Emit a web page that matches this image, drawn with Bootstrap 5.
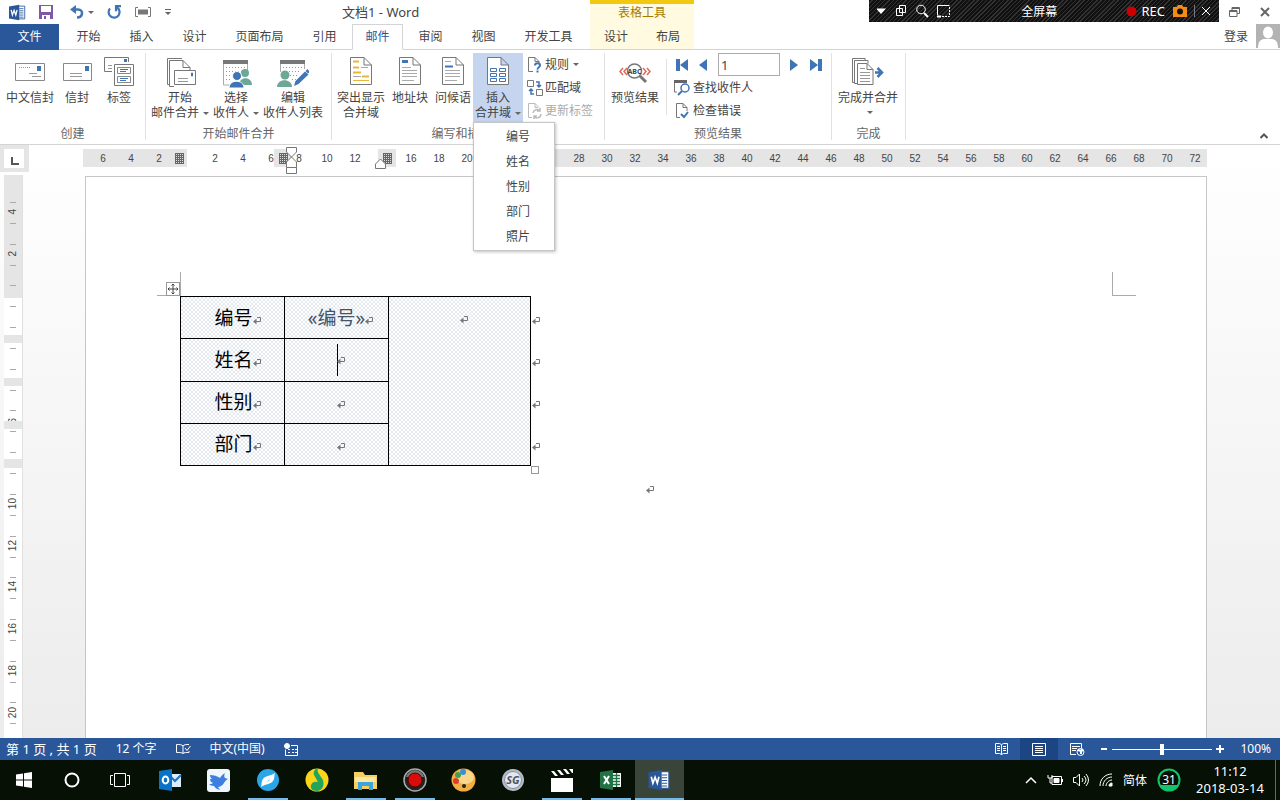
<!DOCTYPE html>
<html lang="zh-CN">
<head>
<meta charset="utf-8">
<meta name="viewport" content="width=device-width, initial-scale=1">
<title>文档1 - Word</title>
<link href="https://cdn.jsdelivr.net/npm/bootstrap@5.3.0/dist/css/bootstrap.min.css" rel="stylesheet">
<style>
body{font-family:"Noto Sans","Noto Sans CJK SC",sans-serif;font-size:12px;line-height:15px;color:#444;background:#fff;height:100vh;overflow:hidden}
button{border:0;background:none;padding:0;color:inherit;font:inherit;display:flex;align-items:center;justify-content:center}
svg{display:block;flex:none}
/* title bar */
.titlebar{height:24px}
.quick{width:342px;padding-left:9px;gap:13px}
.quick button{height:24px}
.doctitle{width:248px;font-size:13px}
.ctxhead{width:104px;height:24px;background:#fffae0;border-top:4px solid #f2c811;color:#a57a00;text-align:center;line-height:18px}
.recorder{width:350px;height:22px;align-self:flex-start;color:#fff;background:repeating-linear-gradient(135deg,#111 0 2px,#333 2px 3px)}
.rec{font-size:13px}
.wincontrols{width:61px}
/* tabs */
.tabrow{height:26px;border-bottom:1px solid #d4d4d4}
.tabrow a{color:#444;text-decoration:none;width:53px;height:26px;line-height:24px;text-align:center;border:1px solid transparent;flex:none}
.tabrow a.wide{width:77px}
.tabrow a.filetab{width:59px;background:#2a579a;color:#fff;margin-right:3px}
.tabrow a.current{width:51px;margin:0 1px;background:#fff;border-color:#d4d4d4 #d4d4d4 #fff;color:#2a579a}
.ctxtabs{background:#fffae0;width:104px;height:25px;margin-left:3px}
.ctxtabs a{width:52px}
.tabrow a.signin{width:40px}
/* ribbon */
.ribbon{height:95px;padding-top:3px;border-bottom:1px solid #d4d4d4}
.rgroup{border-right:1px solid #e1e1e1;height:87px;padding:0 4px}
.g1{width:146px}.g2{width:186px}.g3{width:273px}.g4{width:227px}.g5{width:74px}
.g3{padding-left:3px}
.rlabel{text-align:center;color:#666;line-height:18px;padding-top:3px}
.big{flex-direction:column;justify-content:flex-start;height:69px;padding-top:3px;width:52px;white-space:nowrap}
.big svg.ico{margin-bottom:2px}
.w42{width:42px}.w46{width:46px}.w40{width:40px}.w50{width:50px}.w60{width:60px}.w62{width:62px}.w64{width:64px}
.pressed{background:#c5d5f0}
.rowbtn{height:23px;gap:2px;white-space:nowrap;justify-content:flex-start}
.caret{display:inline-block;border:3px solid transparent;border-top-color:#666;border-bottom:0;margin-left:4px;vertical-align:2px}
.rowbtn .caret{margin-left:2px}
.big>.caret{margin-top:6px}
.off{color:#aaa}
.fieldmenu{left:0;top:69px;width:82px;padding:1px;margin:0;list-style:none;background:#fff;border:1px solid #c6c6c6;box-shadow:1px 1px 3px rgba(0,0,0,.25);z-index:10}
.fieldmenu button{width:100%;height:25px;padding-left:8px}
.recno{width:62px;height:23px;border:1px solid #ababab;padding:0 2px;font-size:13px;color:#444}
.recnav{gap:10px;padding-left:3px}
.vsep{border-left:1px solid #e1e1e1;height:56px;margin:6px 6px 0 5px}
/* workspace */
.work{background:linear-gradient(#fff 0,#ececec 100%)}
.corner{width:29px;height:27px;background:#e5e5e5;padding:4px}
.corner div{background:#fff;width:20px;height:19px}
.hruler{min-width:0;margin:4px 73px 0 54px;height:18px;font:10px/19px "Liberation Sans",sans-serif;padding-left:6px;
 background:linear-gradient(90deg,#e5e5e5 104px,#fff 104px 191px,#e5e5e5 191px 208px,#fff 208px 295px,#e5e5e5 295px 313px,#fff 313px 448px,#e5e5e5 448px)}
.hruler span{width:28px;flex:none;text-align:center}
.hcells{overflow:hidden}
.mk{position:absolute}
.hatch{width:9px;height:11px;top:4px;background:repeating-linear-gradient(90deg,#666 0 1px,transparent 1px 2px),repeating-linear-gradient(#666 0 1px,#ddd 1px 2px)}
.vruler{width:19px;margin:3px 62px 0 4px;padding:16px 0 5px;background:linear-gradient(#e5e5e5 123px,#fff 123px);border-right:1px solid #e0e0e0;font:10px/18px "Liberation Sans",sans-serif}
.vruler::after{content:"";position:absolute;left:0;right:0;top:160px;height:133px;background:linear-gradient(#e5e5e5 8px,transparent 8px 43px,#e5e5e5 43px 51px,transparent 51px 86px,#e5e5e5 86px 94px,transparent 94px 124px,#e5e5e5 124px)}
.vruler div{flex:1;background:linear-gradient(#aaa,#aaa) center 11px/6px 1px no-repeat,linear-gradient(#aaa,#aaa) center 32px/6px 1px no-repeat;display:flex;align-items:center;justify-content:center}
.vruler span{writing-mode:vertical-rl;transform:rotate(180deg)}
.sheet{background:#fff;border:1px solid #c6c6c6;border-bottom:0;margin:4px 73px 0 0;padding-top:95px}
.crops{padding:0 70px 0 71px;height:24px}
.crops div{width:24px;height:24px;border-bottom:1px solid #aaa}
.cl{border-right:1px solid #aaa}.cr{border-left:1px solid #aaa}
.movebox{right:0;bottom:-1px;width:14px;height:14px;border:1px solid #999;background:#fff}
.tablewrap{margin-left:94px;width:360px}
.form-grid{border-collapse:collapse;table-layout:fixed;width:360px;height:170px;color:#000;font-size:19px;line-height:24px}
.form-grid tr{height:42px}
.form-grid td{border:1px solid #000;padding:0 0 0 2px;text-align:center;vertical-align:middle;
 background:conic-gradient(from 270deg at 1px 1px,#93a9bf 90deg,transparent 0) 0 0/4px 4px,conic-gradient(from 270deg at 1px 1px,#93a9bf 90deg,transparent 0) 2px 2px/4px 4px}
.form-grid td.field,.form-grid td.blank{padding-left:0}
.form-grid td.rowend{border:0;background:none;text-align:left;padding-left:1px}
.form-grid td.tall{vertical-align:top;padding:8px 0 0}
.form-grid .field{color:#44546a}
.pm{display:inline-block;margin-right:-8px;vertical-align:0}
.textcaret{display:inline-block;width:1px;height:32px;background:#000;vertical-align:middle;margin-right:-1px}
.sizer{right:1px;bottom:-8px;width:8px;height:8px;border:1px solid #999;background:#fff}
/* status + task bars */
.status{height:22px;background:#2a579a;color:#fff;padding-left:6px;line-height:20px}
.counts{gap:19px}
.pages{font-size:13px}
.status .view{width:38px;height:22px}
.status .on{background:#1c4683}
.zoomer{appearance:none;width:100px;height:12px;margin:0 4px;background:linear-gradient(#fff,#fff) center/100% 1px no-repeat}
.zoomer::-webkit-slider-thumb{appearance:none;width:4px;height:11px;background:#fff}
.pct{width:56px;text-align:right;padding-right:9px}
.taskbar{height:40px;background:#061004;color:#fff}
.taskbar .app{width:49px;height:40px}
.taskbar .sys{width:48px}
.taskbar .task{margin-left:1px}
.taskbar .run{background:linear-gradient(#76b9ed,#76b9ed) center bottom/40px 2px no-repeat}
.taskbar .act{background:linear-gradient(#76b9ed,#76b9ed) center bottom/49px 2px no-repeat,#3a453a}
.tray{gap:10px}
.clock{width:90px;line-height:17px;font-size:13px;text-align:center;margin-left:-6px}
.edge{border-left:1px solid #667;width:5px;height:40px;margin-left:-10px}
</style>
</head>
<body class="d-flex flex-column">
<svg width="0" height="0" class="position-absolute" aria-hidden="true">
 <symbol id="pm" viewBox="0 0 8 8"><path d="M4 .5H7.500V4.500H1" fill="none" stroke="#777"/><path d="M0 4.500L3.500 1.500v6z" fill="#777"/></symbol>
 <symbol id="doc" viewBox="0 0 22 28"><path d="M.5.500H14L21.500 8V27.500H.5zM14 .5V8h7.500" fill="#fff" stroke="#777"/></symbol>
 <symbol id="wlogo" viewBox="0 0 20 20"><path d="M10 2.500h8.500v15H10z" fill="#fff" stroke="#2a579a"/><path d="M12 5.500h5M12 8h5M12 10.500h5M12 13h5M12 15.500h5" stroke="#2a579a"/><path d="M0 3l12-2v18L0 17z" fill="#2a579a"/><path d="M2.500 7l1.500 6L6 7.500 8 13 9.500 7" fill="none" stroke="#fff" stroke-width="1.500"/></symbol>
</svg>

<header>
 <div class="titlebar d-flex align-items-center">
  <div class="quick d-flex align-items-center">
   <svg width="17" height="17"><use href="#wlogo"/></svg>
   <button aria-label="保存"><svg width="14" height="14"><path d="M0 0h14v14H0z" fill="#7d5aa6"/><path d="M2 1h10v6H2zM3 10h8v4H3z" fill="#fff"/><path d="M5 11h2v3H5z" fill="#7d5aa6"/></svg></button>
   <div class="d-flex ps-1"><button aria-label="撤消"><svg width="14" height="14"><path d="M0 4.500L6 0v9z" fill="#3f74b5"/><path d="M3 4.500h5c6 0 5 8-1 8" fill="none" stroke="#3f74b5" stroke-width="2.500"/></svg></button>
   <button aria-label="撤消列表"><i class="caret"></i></button></div>
   <button aria-label="重复"><svg width="15" height="15" fill="none" stroke="#3f74b5" stroke-width="2.200"><path d="M3 3.500a5.500 5.500 0 1 0 7-1M14 1.200H9v5"/></svg></button>
   <button aria-label="键盘"><svg width="16" height="10"><path d="M3 2.500h10v5H3z" fill="#777"/><path d="M3 .5H.5v9H3M13 .5h2.500v9H13" fill="none" stroke="#777"/></svg></button>
   <button aria-label="自定义"><svg width="8" height="8"><path d="M1 1.500h6" stroke="#666"/><path d="M1 4h6L4 7z" fill="#666"/></svg></button>
  </div>
  <div class="doctitle">文档1 - Word</div>
  <div class="ctxhead">表格工具</div>
  <div class="recorder ms-auto d-flex align-items-center ps-2">
   <svg width="75" height="14" fill="none" stroke="#fff"><path d="M-1 4.500H9L4 10z" fill="#fff" stroke="none"/><path d="M19.500 4.500h6v7h-6zM22.500 1.500h6v7h-6z"/><circle cx="44" cy="5.500" r="4.300"/><path d="M47 9l4 4" stroke-width="2"/><path d="M60.500 11V1.500h12"/><path d="M72.500 3v9.500H62" stroke-dasharray="2 1"/><path d="M60 12.500h4" stroke-width="2"/></svg>
   <span class="flex-fill text-center">全屏幕</span>
   <svg width="11" height="11"><circle cx="5.500" cy="5.500" r="5" fill="#c00"/></svg>
   <span class="rec ms-1 me-2">REC</span>
   <svg width="14" height="12"><path d="M0 2h3.500L5 0h4l1.500 2H14v10H0z" fill="#f28c13"/><circle cx="7" cy="6.500" r="3" fill="#111"/></svg>
   <svg width="24" height="12" class="me-2" stroke="#fff"><path d="M7.500 0v12" stroke="#778"/><path d="M15 2l8 8M23 2l-8 8"/></svg>
  </div>
  <div class="wincontrols d-flex justify-content-around">
   <button aria-label="还原"><svg width="11" height="10" fill="none" stroke="#666"><path d="M.5 3.500h7.500v6H.5zM3 3V.500h7.500v6H8"/><path d="M0 4.500h8M3 1.500h8"/></svg></button>
   <button aria-label="关闭"><svg width="10" height="10" stroke="#666" stroke-width="2"><path d="M1 1l8 8M9 1l-8 8"/></svg></button>
  </div>
 </div>
 <nav class="tabrow d-flex">
  <a class="filetab" href="#">文件</a><a href="#">开始</a><a href="#">插入</a><a href="#">设计</a><a class="wide" href="#">页面布局</a><a href="#">引用</a><a class="current" href="#">邮件</a><a href="#">审阅</a><a href="#">视图</a><a class="wide" href="#">开发工具</a>
  <div class="ctxtabs d-flex"><a href="#">设计</a><a href="#">布局</a></div>
  <a class="signin ms-auto" href="#">登录</a>
  <svg width="24" height="24" viewBox="0 0 24 24"><path d="M0 0h24v24H0z" fill="#b3b3b3"/><ellipse cx="12" cy="8.500" rx="5" ry="6" fill="#fff"/><path d="M2 24c0-7 3-9 7-9h6c4 0 7 2 7 9z" fill="#fff"/></svg>
 </nav>
</header>

<section class="ribbon d-flex">
 <div class="rgroup g1">
  <div class="d-flex">
   <button class="big"><svg class="ico" width="32" height="32" fill="none"><path d="M1.500 7.500h29v17h-29z" stroke="#888"/><path d="M23 10h4v5h-4z" fill="#3f74b5"/><path d="M5 11.500h11" stroke="#d9805a" stroke-dasharray="1 1"/><path d="M15 17.500h8M18 20.500h9" stroke="#999"/></svg>中文信封</button>
   <button class="big w42"><svg class="ico" width="32" height="32" fill="none"><path d="M2.500 7.500h28v17h-28z" stroke="#888"/><path d="M24 10h4v5h-4z" fill="#3f74b5"/><path d="M9 17.500h12M9 20.500h12" stroke="#999"/></svg>信封</button>
   <button class="big w42"><svg class="ico" width="32" height="32" fill="none"><path d="M9 15.500H1.500v-14h24V6" stroke="#777"/><path d="M21 3h3v3h-3z" fill="#3f74b5"/><path d="M5 9.500h4M5 12.500h4" stroke="#999"/><path d="M11.500 8.500h19v21h-19z" fill="#fff" stroke="#777"/><path d="M14.500 11.500h13v6h-13zM14.500 20.500h13v6h-13z" stroke="#888"/><path d="M17 13.500h8M17 15.500h6M17 22.500h8M17 24.500h6" stroke="#3f74b5"/></svg>标签</button>
  </div><div class="rlabel">创建</div>
 </div>
 <div class="rgroup g2">
  <div class="d-flex">
   <button class="big w60"><svg class="ico" width="32" height="32" fill="none" stroke="#777"><path d="M5 28.500H3.500V2.500H18"/><path d="M10 30.500H5.500v-26H19l7 7v3"/><path d="M19 4.500v7h7"/><path d="M10.500 14.500h21v14h-21z" fill="#fff"/><path d="M27.500 17h1v3h-1z" fill="#3f74b5" stroke="#3f74b5"/><path d="M14 22.500h10M14 25.500h10" stroke="#999"/></svg><span>开始</span><span>邮件合并<i class="caret"></i></span></button>
   <button class="big"><svg class="ico" width="32" height="32"><path d="M3 4h25v4H3z" fill="#777"/><path d="M3.500 8v21H10M27.500 8v6" stroke="#aaa" fill="none"/><path d="M6 11.500h20M6 15.500h18M6 19.500h8M6 23.500h5" stroke="#999" stroke-dasharray="1 2"/><g fill="#6da796"><circle cx="25" cy="17" r="4"/><path d="M19 29c0-9 13-9 13 0z"/></g><g fill="#3f74b5" stroke="#fff"><circle cx="17" cy="20" r="4.500"/><path d="M9 32c0-9 15-9 15 0z"/></g></svg><span>选择</span><span>收件人<i class="caret"></i></span></button>
   <button class="big w62"><svg class="ico" width="32" height="32"><path d="M3 4h25v4H3z" fill="#777"/><path d="M3.500 8v8M27.500 8v5" stroke="#aaa"/><path d="M6 11.500h20M6 15.500h18M13 19.500h8M15 23.500h6" stroke="#999" stroke-dasharray="1 2"/><g fill="#6da796"><circle cx="8" cy="19" r="4.500"/><path d="M0 31c0-9 15-9 15 0z"/></g><path d="M17 30l1.500-5L28 15.500l3.500 3L21.500 28z" fill="#3f74b5"/><path d="M28.500 15l2-2 2 2.500-1.500 2z" fill="#3f74b5"/></svg><span>编辑</span><span>收件人列表</span></button>
  </div><div class="rlabel">开始邮件合并</div>
 </div>
 <div class="rgroup g3">
  <div class="d-flex">
   <button class="big"><svg class="ico" width="22" height="32" viewBox="0 -1 22 32"><use href="#doc" width="22" height="28"/><path d="M3 4.500h6M3 10.500h6M3 15.500h8M12 19.500h7" stroke="#e5b83b" stroke-width="2"/><path d="M11 10.500h7M3 19.500h8" stroke="#aaa"/><path d="M3 23.500h16" stroke="#e5b83b"/></svg><span>突出显示</span><span>合并域</span></button>
   <button class="big w46"><svg class="ico" width="22" height="32" viewBox="0 -1 22 32"><use href="#doc" width="22" height="28"/><path d="M3 4.500h6" stroke="#3f74b5" stroke-width="3"/><path d="M3 10.500h9M3 13.500h15M3 16.500h15M3 19.500h15M3 23.500h12" stroke="#aaa"/></svg><span>地址块</span></button>
   <button class="big w40"><svg class="ico" width="22" height="32" viewBox="0 -1 22 32"><use href="#doc" width="22" height="28"/><path d="M3 9.500h8" stroke="#3f74b5" stroke-width="2"/><path d="M3 4.500h6M3 13.500h15M3 16.500h15M3 19.500h15M3 23.500h12" stroke="#aaa"/></svg><span>问候语</span></button>
   <div class="position-relative">
    <button class="big w50 pressed" aria-expanded="true"><svg class="ico" width="22" height="32" viewBox="0 -1 22 32"><use href="#doc" width="22" height="28"/><path d="M3.500 11.500h6v3h-6zM12.500 11.500h6v3h-6zM3.500 16.500h6v3h-6zM12.500 16.500h6v3h-6zM3.500 21.500h6v3h-6zM12.500 21.500h6v3h-6z" fill="#fff" stroke="#3f74b5"/></svg><span>插入</span><span>合并域<i class="caret"></i></span></button>
    <ul class="fieldmenu position-absolute">
     <li><button>编号</button></li><li><button>姓名</button></li><li><button>性别</button></li><li><button>部门</button></li><li><button>照片</button></li>
    </ul>
   </div>
   <div class="ps-1">
    <button class="rowbtn"><svg width="16" height="16" fill="none"><path d="M6 14.500H1.500V.500H8l4 4V6M8 .5v4h4" stroke="#777"/><path d="M8 8.500c0-3 5-3 5 0 0 2-2.500 1.500-2.500 4M10.500 13.500v2" stroke="#3f74b5" stroke-width="2"/></svg>规则<i class="caret"></i></button>
    <button class="rowbtn"><svg width="16" height="16" fill="none"><path d="M.5.500h6v6h-6zM9.500 9.500h6v6h-6z" stroke="#777"/><path d="M9 2h3v5M10 5l2 2 2-2M7 14H4V9M2 11l2-2 2 2" stroke="#3f74b5" stroke-width="1.500"/></svg>匹配域</button>
    <button class="rowbtn off" disabled><svg width="16" height="16" fill="none" stroke="#bbb"><path d="M5 14.500H1.500V.500H8l4 4M8 .5v4h3"/><path d="M6 10a4 4 0 0 1 7-2M13 5v3h-3M14 11a4 4 0 0 1-7 2.500M7 16v-3h3" stroke-width="1.500"/></svg>更新标签</button>
   </div>
  </div><div class="rlabel">编写和插入域</div>
 </div>
 <div class="rgroup g4">
  <div class="d-flex">
   <button class="big"><svg class="ico" width="32" height="32" fill="none"><path d="M4 12l-3 3.500 3 3.500M8 12l-3 3.500 3 3.500M24 12l3 3.500-3 3.500M28 12l3 3.500-3 3.500" stroke="#dc6b5b" stroke-width="1.500"/><circle cx="15.500" cy="15" r="7" fill="#fff" stroke="#777" stroke-width="1.500"/><path d="M21 20l6 6" stroke="#777" stroke-width="3"/><text x="15.500" y="18" font-size="7" font-weight="700" text-anchor="middle" fill="#444">ABC</text></svg>预览结果</button>
   <div class="vsep"></div>
   <div>
    <div class="recnav d-flex align-items-center">
     <button aria-label="首记录"><svg width="13" height="12" fill="#3f74b5"><path d="M0 0h4v12H0zM12 0v12L4 6z"/></svg></button>
     <button aria-label="上一记录"><svg width="9" height="12" fill="#3f74b5"><path d="M8 0v12L0 6z"/></svg></button>
     <input class="recno" value="1" aria-label="记录">
     <button aria-label="下一记录"><svg width="9" height="12" fill="#3f74b5"><path d="M0 0v12l8-6z"/></svg></button>
     <button aria-label="尾记录"><svg width="14" height="12" fill="#3f74b5"><path d="M9 0h4v12H9zM1 0v12l8-6z"/></svg></button>
    </div>
    <button class="rowbtn"><svg width="18" height="16" fill="none"><path d="M1 0h13v3H1z" fill="#666"/><path d="M1.500 3v9H4" stroke="#777"/><circle cx="12" cy="8" r="4" fill="#fff" stroke="#3f74b5" stroke-width="1.500"/><path d="M9 11l-4 4" stroke="#3f74b5" stroke-width="2"/></svg>查找收件人</button>
    <button class="rowbtn"><svg width="18" height="16" fill="none"><path d="M7 14.500H3.500V.500H10l4 4V8M10 .5v4h4" stroke="#777"/><path d="M8 11l3 3 4-5" stroke="#3f74b5" stroke-width="2"/></svg>检查错误</button>
   </div>
  </div><div class="rlabel">预览结果</div>
 </div>
 <div class="rgroup g5">
  <div class="d-flex">
   <button class="big w64"><svg class="ico" width="32" height="32" fill="none" stroke="#777"><path d="M3 26.500H.500V2.500H13M13 2v2"/><path d="M5 27.500H2.500V4.500H16v3"/><path d="M5.500 28.500v-21H15l6 6v15z" fill="#fff"/><path d="M15 7.500v6h6"/><path d="M8 12.500h5M8 16.500h10M8 19.500h10M8 22.500h10M8 25.500h10" stroke="#999"/><path d="M23 16.500h7M25.500 12l4.500 4.500L25.500 21" stroke="#3f74b5" stroke-width="2.500"/></svg><span>完成并合并</span><i class="caret"></i></button>
  </div><div class="rlabel">完成</div>
 </div>
 <button class="ms-auto align-self-end mb-1 me-2 px-1" aria-label="折叠功能区"><svg width="8" height="8" fill="none" stroke="#555" stroke-width="2"><path d="M.5 6L4 2.500 7.500 6"/></svg></button>
</section>

<main class="work flex-fill d-flex flex-column overflow-hidden">
 <div class="d-flex">
  <div class="corner"><div><svg width="20" height="19"><path d="M8 8v7h7" fill="none" stroke="#555" stroke-width="2"/></svg></div></div>
  <div class="hruler position-relative flex-fill">
   <div class="hcells d-flex"><span>6</span><span>4</span><span>2</span><span></span><span>2</span><span>4</span><span>6</span><span>8</span><span>10</span><span>12</span><span></span><span>16</span><span>18</span><span>20</span><span></span><span></span><span></span><span>28</span><span>30</span><span>32</span><span>34</span><span>36</span><span>38</span><span>40</span><span>42</span><span>44</span><span>46</span><span>48</span><span>50</span><span>52</span><span>54</span><span>56</span><span>58</span><span>60</span><span>62</span><span>64</span><span>66</span><span>68</span><span>70</span><span>72</span></div>
   <i class="mk hatch" style="left:92px"></i><i class="mk hatch" style="left:196px"></i><i class="mk hatch" style="left:300px"></i>
   <svg class="mk" style="left:203px;top:-2px" width="11" height="28" fill="#fff" stroke="#777"><path d="M.5.500h10V5l-5 5-5-5zM.5 20.500V15l5-5 5 5v5.500zM.5 20.500h10v6H.5z"/></svg>
   <svg class="mk" style="left:292px;top:10px" width="11" height="10" fill="#fff" stroke="#777"><path d="M.5 9.500V5l5-5 5 5v4.500z"/></svg>
  </div>
 </div>
 <div class="d-flex flex-fill">
  <div class="vruler position-relative d-flex flex-column"><div><span>4</span></div><div><span>2</span></div><div></div><div></div><div></div><div><span>6</span></div><div></div><div><span>10</span></div><div><span>12</span></div><div><span>14</span></div><div><span>16</span></div><div><span>18</span></div><div><span>20</span></div></div>
  <article class="sheet flex-fill">
   <div class="crops d-flex justify-content-between"><div class="cl position-relative"><svg class="movebox position-absolute" viewBox="0 0 12 12" fill="none" stroke="#444"><path d="M6 1v10M1 6h10M4.500 2.500L6 1l1.500 1.500M4.500 9.500L6 11l1.500-1.500M2.500 4.500L1 6l1.500 1.500M9.500 4.500L11 6 9.500 7.500"/></svg></div><div class="cr"></div></div>
   <div class="tablewrap position-relative">
    <table class="form-grid">
     <colgroup><col style="width:104px"><col style="width:104px"><col style="width:142px"><col></colgroup>
     <tbody>
     <tr><td>编号<svg class="pm" width="8" height="8"><use href="#pm"/></svg></td><td class="field">«编号»<svg class="pm" width="8" height="8"><use href="#pm"/></svg></td><td rowspan="4" class="tall"><svg class="pm" width="8" height="8"><use href="#pm"/></svg></td><td class="rowend"><svg class="pm" width="8" height="8"><use href="#pm"/></svg></td></tr>
     <tr><td>姓名<svg class="pm" width="8" height="8"><use href="#pm"/></svg></td><td class="blank"><i class="textcaret"></i><svg class="pm" width="8" height="8"><use href="#pm"/></svg></td><td class="rowend"><svg class="pm" width="8" height="8"><use href="#pm"/></svg></td></tr>
     <tr><td>性别<svg class="pm" width="8" height="8"><use href="#pm"/></svg></td><td class="blank"><svg class="pm" width="8" height="8"><use href="#pm"/></svg></td><td class="rowend"><svg class="pm" width="8" height="8"><use href="#pm"/></svg></td></tr>
     <tr><td>部门<svg class="pm" width="8" height="8"><use href="#pm"/></svg></td><td class="blank"><svg class="pm" width="8" height="8"><use href="#pm"/></svg></td><td class="rowend"><svg class="pm" width="8" height="8"><use href="#pm"/></svg></td></tr>
     </tbody>
    </table>
    <i class="sizer position-absolute"></i>
   </div>
   <p class="text-center mb-0 pt-3"><svg class="pm" width="8" height="8"><use href="#pm"/></svg></p>
  </article>
 </div>
</main>

<footer>
 <div class="status d-flex align-items-center">
  <div class="counts d-flex align-items-center">
   <span class="pages">第 1 页 , 共 1 页</span><span>12 个字</span>
   <svg width="15" height="12" fill="none" stroke="#fff"><path d="M7 10.500c-1-1-3-1-6.500-1v-8c3 0 5.500 0 6.500 1.500zM7 3c1-1.500 3-1.500 6-1.500M7 10.500c1-1 3-1 6-1V8M9 5l2 2.500L14.500 3"/></svg>
   <span>中文(中国)</span>
   <svg width="14" height="13" fill="none" stroke="#fff"><circle cx="3" cy="3" r="2.500" fill="#fff"/><path d="M7 2.500h6.500M1.500 6.500v6h12v-10M4 6.500h2M8 6.500h2M11 6.500h2M4 9.500h2M8 9.500h2M11 9.500h2"/></svg>
  </div>
  <div class="ms-auto d-flex align-items-center">
   <button class="view" aria-label="阅读视图"><svg width="13" height="12" fill="none" stroke="#fff"><path d="M6.500 2v9.500M.5.500h4l2 1 2-1h4v10h-4l-2 1-2-1h-4zM2 3.500h3M2 5.500h3M2 7.500h3M8 3.500h3M8 5.500h3M8 7.500h3"/></svg></button>
   <button class="view on" aria-label="页面视图"><svg width="14" height="13" fill="none" stroke="#fff"><path d="M.5.500h13v12H.5zM3 3.500h8M3 5.500h8M3 7.500h8M3 9.500h8"/></svg></button>
   <button class="view" aria-label="Web 版式视图"><svg width="15" height="13" fill="none" stroke="#fff"><path d="M6 11.500H.500V.5h11V5M2 3.500h8M2 5.500h5M2 7.500h4"/><circle cx="10.500" cy="9" r="3.500"/><path d="M8 7l3 1v3M11 6l2 2" stroke-width="2"/></svg></button>
   <button class="ms-1" aria-label="缩小"><svg width="8" height="10" stroke="#fff" stroke-width="2"><path d="M1 5h6"/></svg></button>
   <input class="zoomer" type="range" aria-label="显示比例" min="0" max="100" value="50">
   <button aria-label="放大"><svg width="8" height="10" stroke="#fff" stroke-width="2"><path d="M0 5h8M4 1v8"/></svg></button>
   <span class="pct">100%</span>
  </div>
 </div>
 <div class="taskbar d-flex align-items-center">
  <button class="app sys" aria-label="开始"><svg width="16" height="16" fill="#fff"><path d="M0 2.500l7-1v6H0zM8 1.300L16 0v7.500H8zM0 8.500h7v6l-7-1zM8 8.500h8V16l-8-1.300z"/></svg></button>
  <button class="app sys" aria-label="Cortana"><svg width="16" height="16"><circle cx="8" cy="8" r="6.500" fill="none" stroke="#fff" stroke-width="2"/></svg></button>
  <button class="app sys" aria-label="任务视图"><svg width="20" height="16" fill="none" stroke="#fff"><path d="M4.500 1.500h11v13h-11zM3 3.500H.500v9H3M17 3.500h2.500v9H17"/></svg></button>
  <button class="app task" aria-label="Outlook"><svg width="24" height="22"><path d="M11 5h12v13H11z" fill="#dcebf8"/><path d="M11 6l6 6 6-6" fill="none" stroke="#1b74c5" stroke-width="2"/><path d="M1 2l13-2v22L1 20z" fill="#0a72c4"/><ellipse cx="7.500" cy="11" rx="2.800" ry="3.500" fill="none" stroke="#fff" stroke-width="2"/></svg></button>
  <button class="app" aria-label="迅雷"><svg width="23" height="23"><rect width="23" height="23" rx="3" fill="#eef6ff"/><path d="M3 6c4 0 7 1 10 3 1-2 3-4 5-5-1 2-1 4 0 5l3 1c-2 1-3 2-4 4s-4 4-6 4l2 3c-3-1-5-2-6-4-2 0-4-1-5-2 2 0 3 0 4-1-2-1-3-2-3-4l2 0c-1-1-2-2-2-4z" fill="#3c7fe0"/></svg></button>
  <button class="app run" aria-label="浏览器"><svg width="22" height="22"><circle cx="11" cy="11" r="11" fill="#2aa5e6"/><path d="M4 18c1-3 0-5 2-8 3-4 6-2 12-6-1 3 0 5-2 8-3 4-6 2-12 6z" fill="#fff"/><path d="M10 13l3-4-1 3z" fill="#7cc8f0"/></svg></button>
  <button class="app" aria-label="QQ音乐"><svg width="24" height="24"><circle cx="12" cy="12" r="11.500" fill="#fbd51c"/><path d="M13 0c-1 3 0 4 1 6l4 6c2 7-2 11-6 11-5 0-7-3-6-6 1-3 4-4 7-3L9 7c-1-4 1-6 4-7z" fill="#22a55b"/></svg></button>
  <button class="app run" aria-label="文件资源管理器"><svg width="23" height="19"><path d="M0 1h9l2 3h12v14H0z" fill="#f6cf62"/><path d="M1 6h21v5H1z" fill="#fde8a3"/><path d="M4 19V11h15v8h-4v-4H8v4z" fill="#3ea5dc"/></svg></button>
  <button class="app run" aria-label="录屏"><svg width="24" height="24"><circle cx="12" cy="12" r="11" fill="#222" stroke="#aaa" stroke-width="1.500"/><path d="M3 9c3-9 15-9 18 0z" fill="#777"/><circle cx="12" cy="12" r="7" fill="#d90c0c" stroke="#500"/></svg></button>
  <button class="app" aria-label="画图"><svg width="25" height="24"><ellipse cx="12.500" cy="12" rx="12" ry="11.500" fill="#f2ae42"/><ellipse cx="14" cy="9" rx="9" ry="7" fill="#fbd78c"/><circle cx="7" cy="7" r="3" fill="#44a047"/><circle cx="12" cy="4" r="3" fill="#3b8fd9"/><circle cx="5" cy="13" r="3" fill="#d93c31"/><circle cx="13" cy="18" r="2" fill="#222"/></svg></button>
  <button class="app" aria-label="搜狗"><svg width="24" height="24"><circle cx="12" cy="12" r="11" fill="#b6bdc9"/><circle cx="12" cy="12" r="8.500" fill="#e5e9ef" stroke="#8591a5"/><text x="12" y="16" font-size="11" font-weight="700" font-style="italic" text-anchor="middle" fill="#4c5667">SG</text></svg></button>
  <button class="app run" aria-label="视频"><svg width="24" height="23"><path d="M1 9h22v14H1z" fill="#fff"/><path d="M1 2h3l4 5H5zM7 1h3l4 5h-3zM13 0h3l4 5h-3zM19 0h4v4h-1z" fill="#fff"/></svg></button>
  <button class="app run" aria-label="Excel"><svg width="22" height="20"><path d="M12 3h9v14h-9z" fill="#fff"/><path d="M13 5.500h7M13 8.500h7M13 11.500h7M13 14.500h7M16.500 3v14" stroke="#217346" stroke-width="1.300"/><path d="M0 2l13-2v20L0 18z" fill="#217346"/><path d="M4 6l5 8M9 6l-5 8" stroke="#fff" stroke-width="2"/></svg></button>
  <button class="app act" aria-label="Word"><svg width="23" height="22"><use href="#wlogo"/></svg></button>
  <div class="tray ms-auto d-flex align-items-center">
   <svg width="12" height="8" fill="none" stroke="#fff" stroke-width="1.500"><path d="M1 7l5-5 5 5"/></svg>
   <svg width="16" height="12" fill="none" stroke="#fff"><path d="M5 2.500h9.500v8H5zM15.500 5v3M1 1v3h4V1M3 4v5h2"/><path d="M7 4.500h5v4H7z" fill="#fff"/></svg>
   <svg width="16" height="14" fill="none" stroke="#fff"><path d="M.5 4.500H3l3.500-3.500v12L3 9.500H.500zM9 5q2 2 0 4M11 3q4 4 0 8M13 1q5 6 0 12"/></svg>
   <svg width="14" height="14" fill="none" stroke="#fff"><path d="M1 13C1 6 6 1 13 1M4 13c0-5 4-9 9-9M7 13c0-3 3-6 6-6"/><path d="M10 13c0-2 1-3 3-3v3z" fill="#fff"/></svg>
   <span>简体</span>
   <svg width="24" height="24"><circle cx="12" cy="12" r="10.500" fill="#061004" stroke="#12c46b" stroke-width="2"/><path d="M2 17h20c-3 8-17 8-20 0z" fill="#12c46b"/><text x="12" y="16" font-size="12" text-anchor="middle" fill="#fff">31</text></svg>
   <div class="clock">11:12<br>2018-03-14</div>
   <div class="edge"></div>
  </div>
 </div>
</footer>
<script src="https://cdn.jsdelivr.net/npm/bootstrap@5.3.0/dist/js/bootstrap.bundle.min.js"></script>
</body>
</html>
